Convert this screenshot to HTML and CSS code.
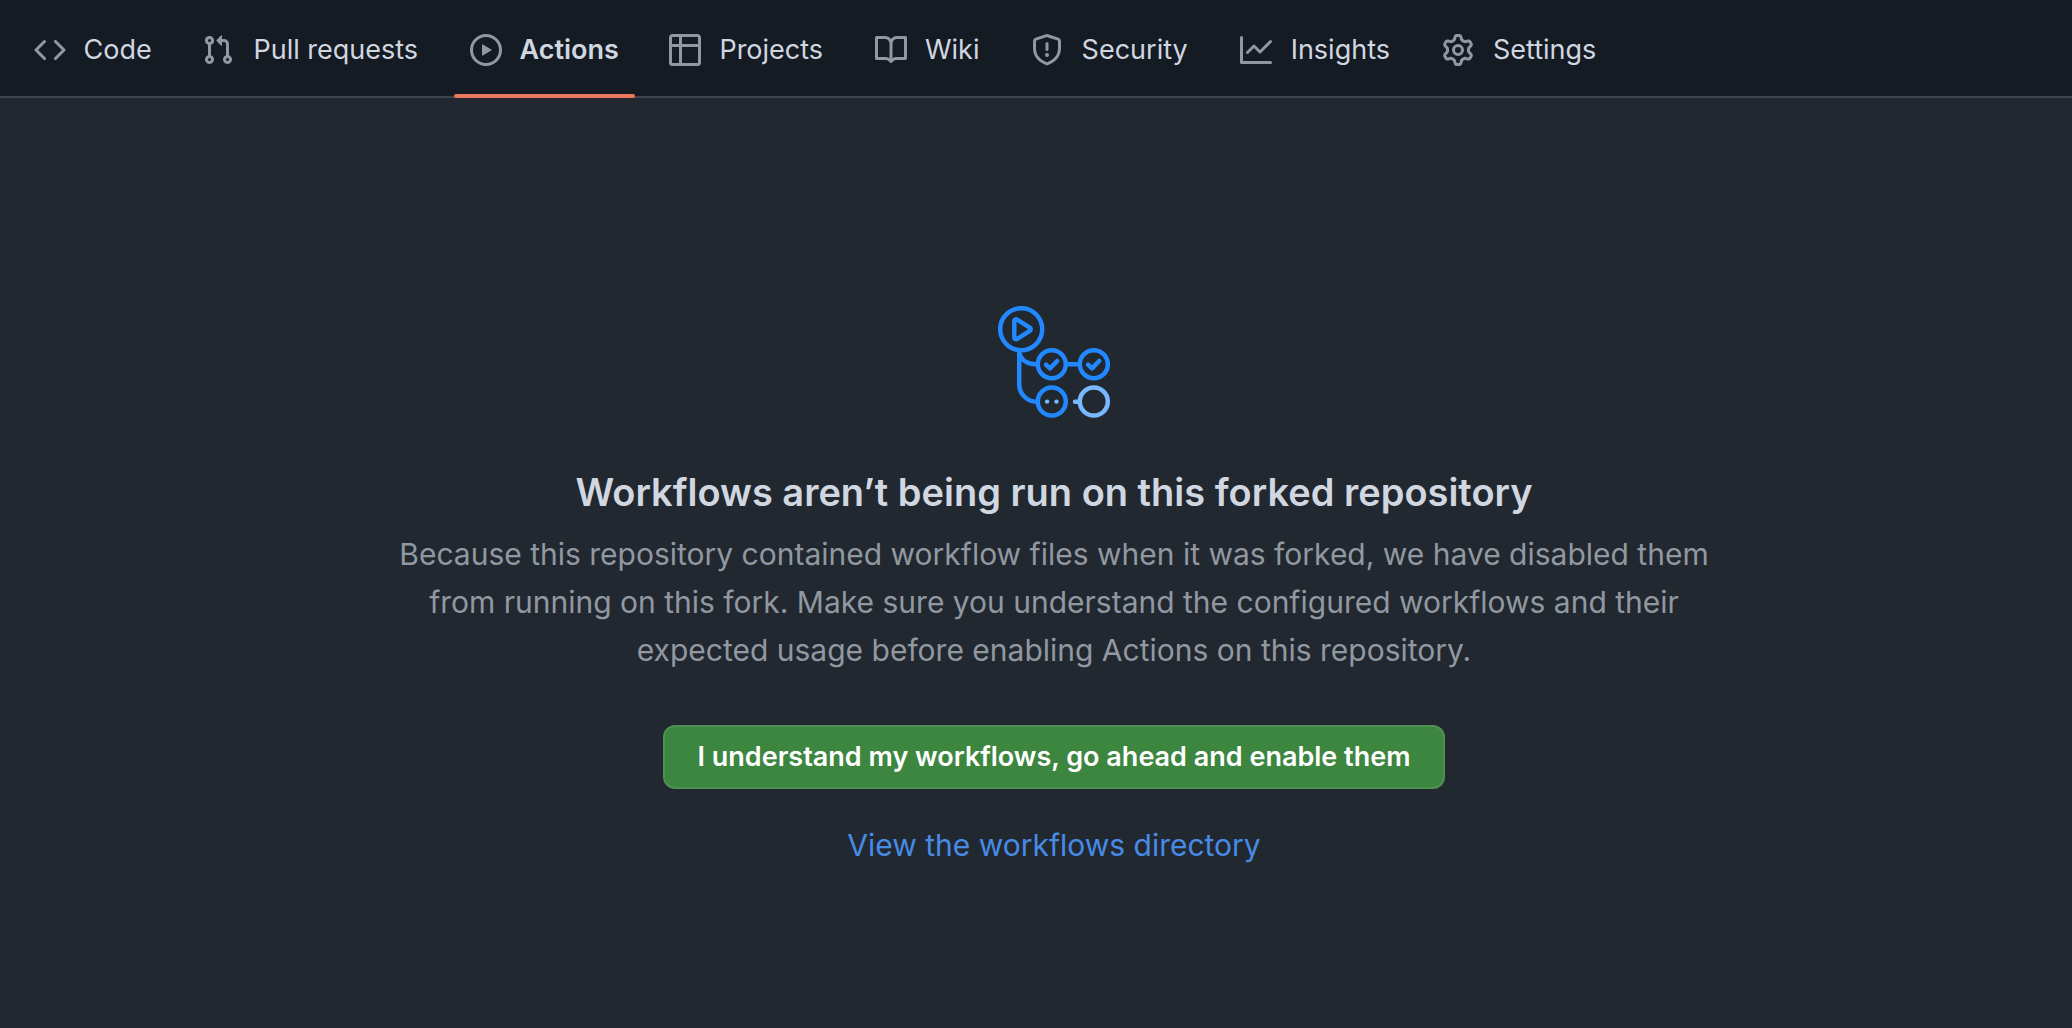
FILE: index.html
```html
<!DOCTYPE html>
<html lang="en">
<head>
<meta charset="utf-8">
<meta name="viewport" content="width=device-width, initial-scale=1">
<title>Actions</title>
<link rel="stylesheet" href="styles.css">
</head>
<body>
<nav class="tabs" aria-label="Repository">
  <a class="tab" href="#code">
    <svg class="icon" viewBox="0 0 16 16" aria-hidden="true"><path fill-rule="evenodd" d="M4.72 3.22a.75.75 0 011.06 1.06L2.06 8l3.72 3.72a.75.75 0 11-1.06 1.06L.47 8.53a.75.75 0 010-1.06l4.25-4.25zm6.56 0a.75.75 0 10-1.06 1.06L13.94 8l-3.72 3.72a.75.75 0 101.06 1.06l4.25-4.25a.75.75 0 000-1.06l-4.25-4.25z"/></svg>
    <span class="label" data-content="Code">Code</span>
  </a>
  <a class="tab" href="#pulls">
    <svg class="icon" viewBox="0 0 16 16" aria-hidden="true"><path fill-rule="evenodd" d="M7.177 3.073L9.573.677A.25.25 0 0110 .854v4.792a.25.25 0 01-.427.177L7.177 3.427a.25.25 0 010-.354zM3.75 2.5a.75.75 0 100 1.5.75.75 0 000-1.5zm-2.25.75a2.25 2.25 0 113 2.122v5.256a2.251 2.251 0 11-1.5 0V5.372A2.25 2.25 0 011.5 3.25zM11 2.5h-1V4h1a1 1 0 011 1v5.628a2.251 2.251 0 101.5 0V5A2.5 2.5 0 0011 2.5zm1 10.25a.75.75 0 111.5 0 .75.75 0 01-1.5 0zM3.75 12a.75.75 0 100 1.5.75.75 0 000-1.5z"/></svg>
    <span class="label" data-content="Pull requests">Pull requests</span>
  </a>
  <a class="tab tab-current" href="#actions" aria-current="page">
    <svg class="icon" viewBox="0 0 16 16" aria-hidden="true"><path fill-rule="evenodd" d="M1.5 8a6.5 6.5 0 1113 0 6.5 6.5 0 01-13 0zM8 0a8 8 0 100 16A8 8 0 008 0zM6.379 5.227A.25.25 0 006 5.442v5.117a.25.25 0 00.379.214l4.264-2.559a.25.25 0 000-.428L6.379 5.227z"/></svg>
    <span class="label" data-content="Actions">Actions</span>
  </a>
  <a class="tab" href="#projects">
    <svg class="icon" viewBox="0 0 16 16" aria-hidden="true"><path fill-rule="evenodd" d="M0 1.75C0 .784.784 0 1.75 0h12.5C15.216 0 16 .784 16 1.75v12.5A1.75 1.75 0 0114.25 16H1.75A1.75 1.75 0 010 14.25V1.75zM1.5 6.5v7.75c0 .138.112.25.25.25H5v-8H1.5zM6.5 6.5v8h7.75a.25.25 0 00.25-.25V6.5h-8zM14.5 5V1.75a.25.25 0 00-.25-.25H6.5V5h8zM5 5V1.5H1.75a.25.25 0 00-.25.25V5H5z"/></svg>
    <span class="label" data-content="Projects">Projects</span>
  </a>
  <a class="tab" href="#wiki">
    <svg class="icon" viewBox="0 0 16 16" aria-hidden="true"><path fill-rule="evenodd" d="M0 1.75A.75.75 0 01.75 1h4.253c1.227 0 2.317.59 3 1.501A3.744 3.744 0 0111.006 1h4.245a.75.75 0 01.75.75v10.5a.75.75 0 01-.75.75h-4.507a2.25 2.25 0 00-1.591.659l-.622.621a.75.75 0 01-1.06 0l-.622-.621A2.25 2.25 0 005.258 13H.75a.75.75 0 01-.75-.75V1.75zm8.755 3a2.25 2.25 0 012.25-2.25H14.5v9h-3.757c-.71 0-1.4.201-1.992.572l.004-7.322zm-1.504 7.324l.004-5.073-.002-2.253A2.25 2.25 0 005.003 2.5H1.5v9h3.757a3.75 3.75 0 011.994.574z"/></svg>
    <span class="label" data-content="Wiki">Wiki</span>
  </a>
  <a class="tab" href="#security">
    <svg class="icon" viewBox="0 0 16 16" aria-hidden="true"><path fill-rule="evenodd" d="M7.467.133a1.75 1.75 0 011.066 0l5.25 1.68A1.75 1.75 0 0115 3.48V7c0 1.566-.32 3.182-1.303 4.682-.983 1.498-2.585 2.813-5.032 3.855a1.7 1.7 0 01-1.33 0c-2.447-1.042-4.049-2.357-5.032-3.855C1.32 10.182 1 8.566 1 7V3.48a1.75 1.75 0 011.217-1.667l5.25-1.68zm.61 1.429a.25.25 0 00-.153 0l-5.25 1.68a.25.25 0 00-.174.238V7c0 1.358.275 2.666 1.057 3.86.784 1.194 2.121 2.34 4.366 3.297a.2.2 0 00.154 0c2.245-.956 3.582-2.104 4.366-3.298C13.225 9.666 13.5 8.36 13.5 7V3.48a.25.25 0 00-.174-.237l-5.25-1.68zM8.75 4.75v3a.75.75 0 01-1.5 0v-3a.75.75 0 011.5 0zM9 10.5a1 1 0 11-2 0 1 1 0 012 0z"/></svg>
    <span class="label" data-content="Security">Security</span>
  </a>
  <a class="tab" href="#insights">
    <svg class="icon" viewBox="0 0 16 16" aria-hidden="true"><path fill-rule="evenodd" d="M1.5 1.75a.75.75 0 00-1.5 0v12.5c0 .414.336.75.75.75h14.5a.75.75 0 000-1.5H1.5V1.75zm14.28 2.53a.75.75 0 00-1.06-1.06L10 7.94 7.53 5.47a.75.75 0 00-1.06 0L3.22 8.72a.75.75 0 001.06 1.06L7 7.06l2.47 2.47a.75.75 0 001.06 0l5.25-5.25z"/></svg>
    <span class="label" data-content="Insights">Insights</span>
  </a>
  <a class="tab" href="#settings">
    <svg class="icon" viewBox="0 0 16 16" aria-hidden="true"><path fill-rule="evenodd" d="M7.429 1.525a6.593 6.593 0 011.142 0c.036.003.108.036.137.146l.289 1.105c.147.56.55.967.997 1.189.174.086.341.183.501.29.417.278.97.423 1.53.27l1.102-.303c.11-.03.175.016.195.046.219.31.41.641.573.989.014.031.022.11-.059.19l-.815.806c-.411.406-.562.957-.53 1.456a4.588 4.588 0 010 .582c-.032.499.119 1.05.53 1.456l.815.806c.08.08.073.159.059.19a6.494 6.494 0 01-.573.99c-.02.029-.086.074-.195.045l-1.103-.303c-.559-.153-1.112-.008-1.529.27-.16.107-.327.204-.5.29-.449.222-.851.628-.998 1.189l-.289 1.105c-.029.11-.101.143-.137.146a6.613 6.613 0 01-1.142 0c-.036-.003-.108-.037-.137-.146l-.289-1.105c-.147-.56-.55-.967-.997-1.189a4.502 4.502 0 01-.501-.29c-.417-.278-.97-.423-1.53-.27l-1.102.303c-.11.03-.175-.016-.195-.046a6.492 6.492 0 01-.573-.989c-.014-.031-.022-.11.059-.19l.815-.806c.411-.406.562-.957.53-1.456a4.587 4.587 0 010-.582c.032-.499-.119-1.05-.53-1.456l-.815-.806c-.08-.08-.073-.159-.059-.19a6.44 6.44 0 01.573-.99c.02-.029.086-.075.195-.045l1.103.303c.559.153 1.112.008 1.529-.27.16-.107.327-.204.5-.29.449-.222.851-.628.998-1.189l.289-1.105c.029-.11.101-.143.137-.146zM8 0c-.236 0-.47.01-.701.03-.743.065-1.29.615-1.458 1.261l-.29 1.106c-.017.066-.078.158-.211.224a5.994 5.994 0 00-.668.386c-.123.082-.233.09-.3.071L3.27 2.776c-.644-.177-1.392.02-1.82.63a7.977 7.977 0 00-.704 1.217c-.315.675-.111 1.422.363 1.891l.815.806c.05.048.098.147.088.294a6.084 6.084 0 000 .772c.01.147-.038.246-.088.294l-.815.806c-.474.469-.678 1.216-.363 1.891.2.428.436.835.704 1.218.428.609 1.176.806 1.82.63l1.103-.303c.066-.019.176-.011.299.071.213.143.436.272.668.386.133.066.194.158.212.224l.289 1.106c.169.646.715 1.196 1.458 1.26a8.094 8.094 0 001.402 0c.743-.064 1.29-.614 1.458-1.26l.29-1.106c.017-.066.078-.158.211-.224a5.98 5.98 0 00.668-.386c.123-.082.233-.09.3-.071l1.102.302c.644.177 1.392-.02 1.82-.63.268-.382.505-.789.704-1.217.315-.675.111-1.422-.364-1.891l-.814-.806c-.05-.048-.098-.147-.088-.294a6.1 6.1 0 000-.772c-.01-.147.039-.246.088-.294l.814-.806c.475-.469.679-1.216.364-1.891a7.992 7.992 0 00-.704-1.218c-.428-.609-1.176-.806-1.82-.63l-1.103.303c-.066.019-.176.011-.299-.071a5.991 5.991 0 00-.668-.386c-.133-.066-.194-.158-.212-.224L10.16 1.29C9.99.645 9.444.095 8.701.031A8.094 8.094 0 008 0zm1.5 8a1.5 1.5 0 11-3 0 1.5 1.5 0 013 0zM11 8a3 3 0 11-6 0 3 3 0 016 0z"/></svg>
    <span class="label" data-content="Settings">Settings</span>
  </a>
</nav>
<main class="blankslate">
  <svg class="workflow" viewBox="0 0 112 112" aria-hidden="true">
    <g class="flow">
      <circle cx="23.2" cy="23.2" r="21"/>
      <path d="M16.3 15.2v16.2c0 1.6 1.6 2.3 2.9 1.5l12.6-8c1.2-.8 1.2-2.4 0-3.2l-12.6-8c-1.300-.8-2.9-.1-2.9 1.5z"/>
      <path d="M21.2 44.5v33.5a17.5 17.5 0 0017.5 17.7M21.2 44.5c.5 8.5 6.3 13.8 17.5 13.8M68.500 58.3h12.5"/>
      <circle cx="53.8" cy="58.3" r="14"/>
      <circle cx="95.8" cy="58.3" r="14"/>
      <circle cx="53.8" cy="95.6" r="14"/>
      <path d="M48 58.700l4 3.700 7.200-7.400M90 58.700l4 3.700 7.200-7.400"/>
    </g>
    <g class="pending">
      <circle cx="95.8" cy="95.6" r="14"/>
      <path d="M77 95.800h4"/>
    </g>
    <g class="dots"><circle cx="49.1" cy="95.6" r="2.2"/><circle cx="58.5" cy="95.6" r="2.2"/></g>
  </svg>
  <h1 class="title">Workflows aren’t being run on this forked repository</h1>
  <p class="text">Because this repository contained workflow files when it was forked, we have disabled them from running on this fork. Make sure you understand the configured workflows and their expected usage before enabling Actions on this repository.</p>
  <button class="enable" type="button">I understand my workflows, go ahead and enable them</button>
  <a class="link" href="#workflows">View the workflows directory</a>
</main>
</body>
</html>
```
FILE: styles.css
```css
* {
  box-sizing: border-box;
}

body {
  margin: 0;
  min-height: 100vh;
  background: #22282f;
  color: #d1d7e0;
  font-family: Inter, "Liberation Sans", sans-serif;
}

.tabs {
  display: flex;
  gap: 18px;
  padding: 0 18px;
  background: #151b23;
  border-bottom: 2px solid #3d444d;
}

.tab {
  position: relative;
  display: flex;
  align-items: center;
  gap: 17px;
  margin-bottom: -2px;
  padding: 30px 16px 28px;
  color: inherit;
  font-size: 27px;
  line-height: 40px;
  text-decoration: none;
  white-space: nowrap;
}

.tab-current {
  font-weight: 600;
}

.tab-current::after {
  content: "";
  position: absolute;
  left: 0;
  right: 0;
  bottom: 0;
  height: 4px;
  border-radius: 2px;
  background: #ec775c;
}

.icon {
  width: 32px;
  height: 32px;
  flex: none;
  fill: #9198a1;
}

/* Reserves the bold width so a tab keeps its size when selected. */
.label {
  text-align: center;
}

.label::before {
  content: attr(data-content);
  display: block;
  height: 0;
  font-weight: 600;
  visibility: hidden;
}

.blankslate {
  display: flex;
  flex-direction: column;
  align-items: center;
  padding: 208px 32px 64px 68px;
  text-align: center;
}

.workflow {
  width: 112px;
  height: 112px;
  fill: none;
  stroke-width: 4.5;
  stroke-linecap: round;
  stroke-linejoin: round;
}

.flow {
  stroke: #2188ff;
}

.pending {
  stroke: #79b8ff;
}

.dots {
  fill: #79b8ff;
}

.title {
  margin: 44px 0 8px;
  font-size: 38px;
  font-weight: 600;
  line-height: 60px;
}

.text {
  max-width: 1340px;
  margin: 0;
  color: #9198a1;
  font-size: 30px;
  line-height: 48px;
}

.enable {
  height: 64px;
  margin: 51px 0 32px;
  padding: 0 32px;
  border: 2px solid #4f8f53;
  border-radius: 12px;
  background: #3c8640;
  color: #fff;
  font: 600 27px/40px Inter, "Liberation Sans", sans-serif;
}

.link {
  color: #478be6;
  font-size: 30px;
  line-height: 48px;
  text-decoration: none;
}
```
